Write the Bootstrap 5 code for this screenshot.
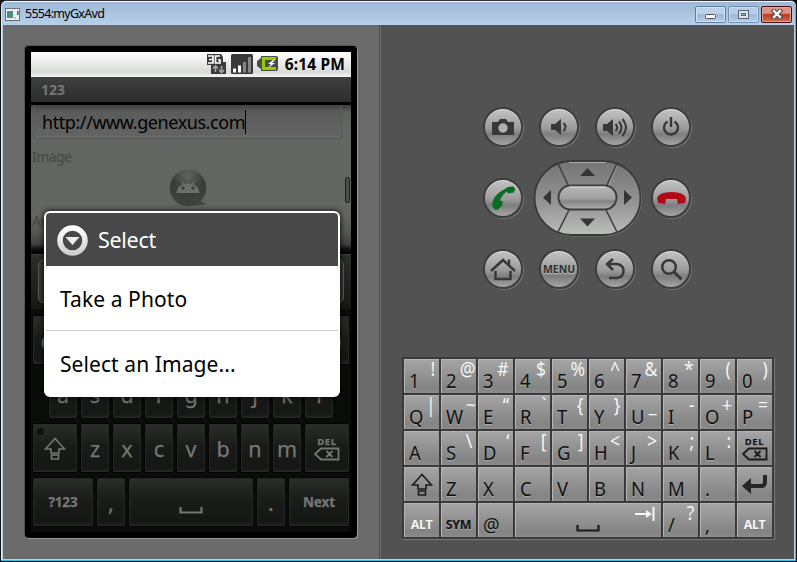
<!DOCTYPE html>
<html lang="en">
<head>
<meta charset="utf-8">
<title>5554:myGxAvd</title>
<link href="https://cdn.jsdelivr.net/npm/bootstrap@5.3.0/dist/css/bootstrap.min.css" rel="stylesheet">
<style>
body{width:797px;height:562px;overflow:hidden;background:#000;font-family:"Noto Sans",sans-serif;color:#111;line-height:1}
svg{display:block;flex:none}
.win{width:797px;height:562px;background:linear-gradient(#9db8d6,#b9d1ea 26px,#b9d1ea);border:1px solid #111;border-top-color:#333036;border-bottom-color:#000;border-radius:6px 6px 0 0;box-shadow:inset 0 1px #f4f8fc,inset -1px -1px #2cc5e8,inset 1px 0 #dfeaf6;padding:1px 2px 2px}
.tbar{height:23px;flex:none;padding:1px 0 0 2px}
.wtitle{font-size:12.5px;letter-spacing:-.72px;color:#000;margin-left:5px}
.wbtns{gap:2px;margin-right:2px}
.wbtn{width:31px;height:17px;border:1px solid #5f7d9f;border-radius:2px;box-shadow:inset 0 0 0 1px #d5e4f3;background:linear-gradient(#bcd2e8 45%,#9bb8d6 50%,#b4cee8)}
.wmax{opacity:.75}
.wclose{border-color:#430f14;box-shadow:inset 0 0 0 1px #e3a294;background:linear-gradient(#dd9384 42%,#bd3a24 48%,#cf6b50)}
.lpane{width:376px;background:#6b6b6b;padding:21px 0 0 22px}
.rpane{background:#525252;border-left:1px solid #4a4a4a;box-shadow:inset 1px 0 #707070}
.phone{width:332px;height:492px;background:#000;border-radius:4px;padding:6px;box-shadow:1px 1px #999,-1px -1px #555}
.scr{width:320px;height:480px;overflow:hidden}
.status{height:25px;background:linear-gradient(#fff,#e5e7e5 55%,#d8dad8 80%,#f7f7f7);padding-right:6px;flex:none}
.clock{font-size:15.5px;font-weight:700;color:#000;letter-spacing:.15px;margin-left:7px;line-height:27px}
.apptitle{height:25px;background:linear-gradient(#3e403e,#2c2d2c);color:#757775;font-size:14px;font-weight:700;line-height:25px;padding-left:10px;flex:none}
.page{height:152px;flex:none;border-top:3px solid #000;background:linear-gradient(#3a3b3a,#5e605e 7px,#636563 20px,#636563 110px,#545654 128px,#404240 139px,#111 144px,#000)}
.urlf{width:309px;height:34px;margin-left:2px;border:1px solid #535853;border-top:0;border-radius:0 0 4px 4px;box-shadow:inset 0 -2px 2px #6c6d6c;background:linear-gradient(#414241,#5a5c5a 7px,#656366);padding:4px 0 0 8px}
.urlf span{font-size:18px;letter-spacing:-.43px;line-height:26px;color:#000}
.caret{width:1px;height:24px;background:#000;margin-top:1px}
.lab{font-size:14px;color:#454745;line-height:18px;letter-spacing:-.55px;padding-left:1px}
.lab1{margin-top:9px}.lab2{margin-top:4px}
.picrow{height:40px;margin-top:2px}
.pl{width:137px}.pr{width:143px}
.thumb{width:5px;height:26px;border:1px solid #222;border-radius:2px;background:#4a4c4a}
.cand{height:55px;flex:none;background:linear-gradient(#2b2e2b,#161816);border-top:1px solid #3f423f;padding:5px 7px}
.cand div{height:43px;border:1px solid #5a5c5a;border-radius:5px;background:#343634}
.kb{background:#0a0c0a;padding:7px 2px 0;gap:6px;flex:1}
.kb .krow{height:48px;gap:4px}
.k{width:28px;height:48px;background:linear-gradient(#2a2d2a,#1a1c1a 45%,#151715 90%,#202220);box-shadow:inset 0 0 0 1px #272a27,0 0 0 1px #030403;border-radius:2px;color:#757775;font-size:21.5px;-webkit-text-stroke:.25px #757775;flex:none;padding-top:1px}
.k44{width:44px}.k60{width:60px}.k124{width:124px}
.kbold{font-size:13.5px;font-weight:700;letter-spacing:-.1px}
.dot{width:7px;height:7px;border-radius:50%;background:#111;left:4px;top:4px}
.dlg{left:44px;top:211px;width:296px;height:186px;border:2px solid #fff;border-radius:6px;background:#fff;overflow:hidden;box-shadow:0 0 5px 1px rgba(0,0,0,.75)}
.dhead{height:53px;background:#484848;color:#fff;padding:2px 0 0 11px;font-size:21.5px;letter-spacing:-.3px}
.dhead span{margin:-2px 0 0 10px}
.ditem{height:64px;font-size:21px;color:#000;padding:3px 0 0 14px;letter-spacing:.08px}
.ditem+.ditem{border-top:1px solid #ccc;height:65px}
.ctl{display:grid;grid-template-columns:repeat(4,40px);grid-auto-rows:40px;gap:31px 16px;margin:82px 0 0 103px;height:182px}
.rb{width:40px;height:40px;border:2px solid #3d3d3d;border-radius:50%;background:linear-gradient(#c4c4c4,#9a9a9a 55%,#7d7d7d 70%,#a4a4a4);box-shadow:1px 1px #737373,inset 0 1px #ddd;padding:0}
.rb span{font-size:10.5px;font-weight:700;color:#303030;text-shadow:0 1px #bbb;letter-spacing:-.05px}
.dpad{grid-column:span 2;margin:-19px 0 -19px -6px}
.hkb{display:grid;grid-template-columns:repeat(10,35px);grid-auto-rows:34px;gap:2px;padding:2px;background:#3a3a3a;width:372px;margin:68px 0 0 22px;box-shadow:1px 1px #777}
.h{background:linear-gradient(#a5a5a5,#848484 85%,#8b8b8b);box-shadow:inset 1px 1px #b6b6b6}
.h b{font-weight:400;font-size:20.5px;line-height:20px;color:#111;align-self:flex-end;margin:0 0 3px 5px;text-shadow:0 1px #aaa;transform:scaleX(.9);transform-origin:0}
.h i{font-style:normal;font-size:19.5px;line-height:20px;color:#f5f5f5;align-self:flex-start;margin:0 4px 0 auto;transform:scaleX(.9);transform-origin:100%}
.sp4{grid-column:span 4}
.spbar{margin:0 13px 5px 0}
.tabico{margin:4px 6px 0 22px}
.cap{font-size:12.5px;font-weight:700;padding-top:11px;letter-spacing:-.3px;text-shadow:0 1px #aaa}
.capw{color:#f5f5f5;text-shadow:0 1px #777}
.del{font-size:9.5px;font-weight:700;letter-spacing:.7px;line-height:11px}
</style>
<script src="https://cdn.jsdelivr.net/npm/bootstrap@5.3.0/dist/js/bootstrap.bundle.min.js"></script>
</head>
<body>
<div class="win d-flex flex-column">
  <div class="tbar d-flex align-items-center">
    <svg width="15" height="13"><rect x=".5" y=".5" width="14" height="12" fill="#eef1f1" stroke="#667078"/><rect x="2" y="3" width="6" height="7" fill="#4b8f88"/><rect x="9" y="9" width="2" height="2" fill="#bbb"/><rect x="12" y="3" width="1.5" height="4" fill="#357"/></svg>
    <span class="wtitle">5554:myGxAvd</span>
    <div class="wbtns d-flex ms-auto">
      <div class="wbtn d-flex align-items-center justify-content-center"><svg width="11" height="11"><rect x=".5" y="5.500" width="10" height="4" rx="1" fill="#fff" stroke="#555"/></svg></div>
      <div class="wbtn wmax d-flex align-items-center justify-content-center"><svg width="11" height="9"><rect x=".5" y=".5" width="10" height="8" fill="#eee" stroke="#445"/><rect x="3.500" y="3.500" width="4" height="2" fill="#9bc" stroke="#445"/></svg></div>
      <div class="wbtn wclose d-flex align-items-center justify-content-center"><svg width="12" height="10"><path d="M3 2 9 8M9 2 3 8" stroke="#444b55" stroke-width="4.500" stroke-linecap="square"/><path d="M3 2 9 8M9 2 3 8" stroke="#fff" stroke-width="2.400" stroke-linecap="square"/></svg></div>
    </div>
  </div>
  <div class="d-flex flex-fill">
    <div class="lpane">
      <div class="phone"><div class="scr d-flex flex-column">
        <div class="status d-flex align-items-center justify-content-end">
          <svg width="72" height="22" viewBox="0 0 72 22">
            <path d="M1 0h14l2 3v5h3v12H5V11H1z" fill="#3b3b3b"/><path d="M2 2h5v7H2M3 5.500h4M14 2H9.500v7H14V6h-2" fill="none" stroke="#fff" stroke-width="1.700"/><path d="M9.500 18v-5M7 14.500 9.500 12l2.500 2.500M15.500 12v5M13 16l2.500 2.500L18 16" fill="none" stroke="#a5a5a5" stroke-width="1.600"/>
            <rect x="25" y="0" width="22" height="20" rx="1.500" fill="#393939"/><path d="M28.500 18.500v-4M33.500 18.500v-7" stroke="#fff" stroke-width="3"/><path d="M38.500 18.500V8M43.500 18.500V3" stroke="#868686" stroke-width="3"/>
            <path d="M55 2h15q2 0 2 2v11q0 2-2 2H55v-2l-4-3V7l4-3z" fill="#4b4b4b"/><path d="M70 4.500H57.500v10H70" fill="none" stroke="#92cc00" stroke-width="3"/><path d="m67 6-5 4h3l-3 4 7-5h-3l3-3z" fill="#fff"/>
          </svg>
          <span class="clock">6:14 PM</span>
        </div>
        <div class="apptitle">123</div>
        <div class="page">
          <div class="urlf d-flex"><span>http://www.genexus.com</span><div class="caret"></div></div>
          <div class="lab lab1">Image</div>
          <div class="picrow d-flex align-items-center">
            <div class="pl"></div>
            <svg width="39" height="38" viewBox="0 0 39 38"><defs><radialGradient id="gb" cx=".5" cy=".15" r=".9"><stop offset="0" stop-color="#626462"/><stop offset=".5" stop-color="#393c39"/><stop offset="1" stop-color="#414441"/></radialGradient></defs><path d="M20 37q10 0 18-2l-6-3z" fill="#3f423f"/><circle cx="20" cy="19" r="18.300" fill="url(#gb)"/><path d="M8.500 24c1-7 5-9.500 11.500-9.500S30.500 17 31.500 24z" fill="#6c6d6c"/><path d="m13 11 3 5m11-5-3 5" stroke="#6c6d6c" stroke-width="1.300"/><circle cx="15" cy="19" r="1.500" fill="#353735"/><circle cx="25" cy="19" r="1.500" fill="#353735"/></svg>
            <div class="pr d-flex justify-content-end"><div class="thumb mt-1"></div></div>
          </div>
          <div class="lab lab2">Audio</div>
        </div>
        <div class="cand"><div></div></div>
        <div class="kb d-flex flex-column" id="soft"></div>
      </div></div>
      <div class="dlg position-absolute">
        <div class="dhead d-flex align-items-center"><svg width="31" height="31" viewBox="0 0 31 31"><defs><linearGradient id="rg" x2="0" y2="1"><stop stop-color="#fff"/><stop offset="1" stop-color="#d0d0d0"/></linearGradient></defs><circle cx="15.500" cy="15.500" r="12.500" fill="none" stroke="url(#rg)" stroke-width="5.500"/><path d="M8.500 12h14l-7 8z" fill="#eee"/></svg><span>Select</span></div>
        <div class="ditem d-flex align-items-center">Take a Photo</div>
        <div class="ditem d-flex align-items-center">Select an Image...</div>
      </div>
    </div>
    <div class="rpane flex-fill">
      <div class="ctl">
        <div class="rb d-flex align-items-center justify-content-center"><svg width="22" height="16" viewBox="0 0 22 16"><path d="M0 3h6l2-3h6l2 3h6v13H0z" fill="#383838"/><circle cx="11" cy="9" r="4.700" fill="#b0b0b0"/></svg></div>
        <div class="rb d-flex align-items-center justify-content-center"><svg width="18" height="18" viewBox="0 0 18 18"><path d="M1 6h4l6-5v16l-6-5H1z" fill="#383838"/><path d="M13.500 5q4 4 0 8" fill="none" stroke="#383838" stroke-width="2"/></svg></div>
        <div class="rb d-flex align-items-center justify-content-center"><svg width="24" height="19" viewBox="0 0 24 19"><path d="M0 6h4l6-5v17l-6-5H0z" fill="#383838"/><path d="M12.500 6q3.500 3.500 0 7M16 3.500q5 6 0 12M19.500 1q7 8.500 0 17" fill="none" stroke="#383838" stroke-width="2"/></svg></div>
        <div class="rb d-flex align-items-center justify-content-center"><svg width="18" height="20" viewBox="0 0 18 20"><path d="M5.500 4.500a7 7 0 1 0 7 0M9 0v10" fill="none" stroke="#383838" stroke-width="2.400"/></svg></div>

        <div class="rb d-flex align-items-center justify-content-center"><svg width="25" height="25" viewBox="0 0 25 25"><path d="M14 3q4-3 8-2.500 2 .5 2 3l-1 3-6 1-1-2q-5 3-7 9l3 1-1 4-4 4q-3 1-5-2-2-4 1-9Q6 7 14 3z" fill="#0a6b22"/></svg></div>
        <div class="dpad">
          <svg width="110" height="78" viewBox="0 0 110 78"><defs><linearGradient id="dg" x2="0" y2="1"><stop stop-color="#747474"/><stop offset=".6" stop-color="#969696"/><stop offset="1" stop-color="#bcbfbc"/></linearGradient><linearGradient id="pg" x2="0" y2="1"><stop stop-color="#b8b8b8"/><stop offset=".55" stop-color="#a0a0a0"/><stop offset=".65" stop-color="#848484"/><stop offset="1" stop-color="#b0b0b0"/></linearGradient></defs>
          <rect x="2.500" y="3" width="106" height="74" rx="37" fill="none" stroke="#777"/><rect x="1.500" y="2" width="106" height="74" rx="37" fill="url(#dg)" stroke="#3a3a3a" stroke-width="1.800"/><path d="M36 3.500h37M35 27 26 7M75 27 84 7" fill="none" stroke="#aaa"/><path d="M35 26 25 4.500M74 26 84 4.500M36 51 25 73M73 51 84 73" stroke="#3d3d3d" stroke-width="1.600"/><rect x="25.500" y="26.500" width="58" height="24" rx="12" fill="url(#pg)" stroke="#3d3d3d" stroke-width="2"/><path d="M36 28h37" stroke="#e0e0e0"/><path d="m47 17 7.500-8 7.500 8zM18 31v15l-8-7.500zM91 31v15l8-7.500zM47 59.500h15l-7.500 8z" fill="#353535"/></svg>
        </div>
        <div class="rb d-flex align-items-center justify-content-center"><svg width="29" height="12" viewBox="0 0 29 12"><path d="M0 6Q2 0 14.500 0T29 6l-1 5-7 1-1-5H9l-1 5-7-1z" fill="#b00b16"/></svg></div>

        <div class="rb d-flex align-items-center justify-content-center"><svg width="26" height="23" viewBox="0 0 26 23"><path d="M1 13 13 2l12 11M19 7V1.500M5.500 13v8h15v-8" fill="none" stroke="#383838" stroke-width="2.500"/></svg></div>
        <div class="rb d-flex align-items-center justify-content-center"><span>MENU</span></div>
        <div class="rb d-flex align-items-center justify-content-center"><svg width="20" height="22" viewBox="0 0 20 22"><path d="M8 1 2 6l6 6M2 6h10q6.500 1 6.500 7T12 20H4" fill="none" stroke="#383838" stroke-width="2.500"/></svg></div>
        <div class="rb d-flex align-items-center justify-content-center"><svg width="23" height="23" viewBox="0 0 23 23"><circle cx="9" cy="9" r="6.800" fill="none" stroke="#383838" stroke-width="2.500"/><path d="m14 14 7.500 7.500" stroke="#383838" stroke-width="3"/></svg></div>
      </div>
      <div class="hkb" id="hard"></div>
    </div>
  </div>
</div>
<script>
const shift = c => `<svg width="22" height="23" viewBox="0 0 22 23"><path d="M11 1.500 1.500 12H7v4h8v-4h5.500zM7.500 18h7v4h-7z" fill="none" stroke="${c}" stroke-width="1.600"/></svg>`;
const del = c => `<div class="d-flex flex-column align-items-center"><span class="del">DEL</span><svg width="26" height="14" viewBox="0 0 26 14"><path d="M1 7 7 1.500h17.500v11H7zM12.500 4l6 6m0-6-6 6" fill="none" stroke="${c}" stroke-width="1.800"/></svg></div>`;
const bar = c => `<svg width="24" height="7" viewBox="0 0 24 7"><path d="M1.500 0v5.500h21V0" fill="none" stroke="${c}" stroke-width="2.200"/></svg>`;
const k = (t, x = '') => `<div class="k ${x} d-flex align-items-center justify-content-center">${t}</div>`;
const row = (h, x = '') => `<div class="krow d-flex ${x}">${h}</div>`;
document.getElementById('soft').innerHTML =
  row([...'qwertyuiop'].map(c => k(c)).join('')) +
  row([...'asdfghjkl'].map(c => k(c)).join(''), 'justify-content-center') +
  row(k('<div class="dot position-absolute"></div>' + shift('#757775'), 'k44 position-relative') + [...'zxcvbnm'].map(c => k(c)).join('') + k(del('#757775'), 'k44')) +
  row(k('?123', 'k60 kbold') + k(',') + k(`<div class="pt-3">${bar('#757775')}</div>`, 'k124') + k('.') + k('Next', 'k60 kbold'));

const esc = c => c.replace('&', '&amp;').replace('<', '&lt;');
const h = (m, a = '') => `<div class="h d-flex"><b>${m}</b>${a.trim() ? `<i>${esc(a)}</i>` : ''}</div>`;
const s = (t, x = '') => `<div class="h d-flex align-items-center justify-content-center ${x}">${t}</div>`;
const pairs = (m, a) => [...m].map((c, n) => h(c, a[n])).join('');
document.getElementById('hard').innerHTML =
  pairs('1234567890', '!@#$%^&*()') +
  pairs('QWERTYUIOP', '|~“`{}_-+=') +
  pairs('ASDFGHJKL', ' \\‘[]<>;:') + s(del('#1b1b1b')) +
  s(shift('#1b1b1b')) + pairs('ZXCVBNM.', '') +
  s('<svg width="26" height="20" viewBox="0 0 26 20"><path d="M23 1v7q0 4-4 4H8" fill="none" stroke="#262626" stroke-width="4"/><path d="M9 4v16L0 12z" fill="#262626"/></svg>') +
  s('ALT', 'cap capw') + s('SYM', 'cap') + h('@') +
  `<div class="h sp4 d-flex justify-content-end"><div class="spbar align-self-end">${bar('#1b1b1b')}</div><svg class="tabico" width="20" height="14" viewBox="0 0 20 14"><path d="M0 7h14M18.500 0v14" stroke="#f5f5f5" stroke-width="2"/><path d="M11 3v8l6-4z" fill="#f5f5f5"/></svg></div>` +
  h('/', '?') + h(',') + s('ALT', 'cap capw');
</script>
</body>
</html>
